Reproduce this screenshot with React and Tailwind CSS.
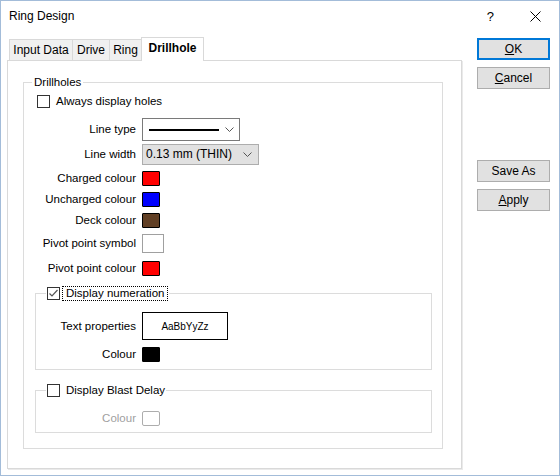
import React from 'react';

const font = { fontFamily: '"Liberation Sans", Arial, sans-serif' };

function Chevron() {
  return (
    <svg width="9" height="5" viewBox="0 0 9 5" className="shrink-0">
      <polyline points="0.5,0.5 4.5,4.5 8.5,0.5" fill="none" stroke="#555" strokeWidth="1" />
    </svg>
  );
}

function Checkbox({ checked }) {
  return (
    <span className="w-[13px] h-[13px] border border-[#333] bg-white flex items-center justify-center shrink-0">
      {checked && (
        <svg width="11" height="11" viewBox="0 0 11 11">
          <polyline points="1.5,5.5 4,8 9.5,2" fill="none" stroke="#555" strokeWidth="1.2" />
        </svg>
      )}
    </span>
  );
}

function Swatch({ color }) {
  return <span className="block w-[18px] h-[15px] border border-black rounded-[1px]" style={{ background: color }} />;
}

function Row({ label, labelW, className = '', children, muted }) {
  return (
    <div className={`flex items-center ${className}`}>
      <div className={`text-right shrink-0 ${muted ? 'text-[#a0a0a0]' : 'text-black'}`} style={{ width: labelW }}>
        {label}
      </div>
      <div className="ml-[6px] flex items-center">{children}</div>
    </div>
  );
}

function Button({ children, primary, className = '' }) {
  return (
    <button
      className={`w-[73px] h-[22px] bg-[#e1e1e1] flex items-center justify-center text-black ${
        primary ? 'border-2 border-[#0078d7]' : 'border border-[#adadad]'
      } ${className}`}
    >
      {children}
    </button>
  );
}

export default function App() {
  return (
    <div
      className="w-[560px] h-[476px] bg-white border border-[#a3bcd9] flex flex-col text-[11.5px] leading-[15px] text-black overflow-hidden"
      style={font}
    >
      {/* Title bar */}
      <div className="h-[30px] flex items-center shrink-0">
        <div className="pl-[8px] text-[12px]">Ring Design</div>
        <div className="ml-auto flex items-center">
          <span className="text-[13px] mr-[36px]">?</span>
          <svg width="11" height="11" viewBox="0 0 11 11" className="mr-[18px]">
            <line x1="0.5" y1="0.5" x2="10.5" y2="10.5" stroke="#000" strokeWidth="1" />
            <line x1="10.5" y1="0.5" x2="0.5" y2="10.5" stroke="#000" strokeWidth="1" />
          </svg>
        </div>
      </div>

      <div className="flex flex-1">
        {/* Left column: tabs + panel */}
        <div className="ml-[6px] pt-[6px] w-[455px] shrink-0 flex flex-col">
          <div className="flex items-end h-[23px] pl-[2px] relative z-10 text-[12px]">
            <div className="w-[64px] h-[21px] border border-b-0 border-[#d9d9d9] bg-[#f0f0f0] flex items-center justify-center">
              Input Data
            </div>
            <div className="-ml-px w-[38px] h-[21px] border border-b-0 border-[#d9d9d9] bg-[#f0f0f0] flex items-center justify-center">
              Drive
            </div>
            <div className="-ml-px w-[33px] h-[21px] border border-b-0 border-[#d9d9d9] bg-[#f0f0f0] flex items-center justify-center">
              Ring
            </div>
            <div className="-ml-px w-[63px] h-[24px] -mb-px border border-b-0 border-[#d9d9d9] bg-white flex items-center justify-center font-bold pb-[2px]">
              Drillhole
            </div>
          </div>

          <div className="w-[455px] h-[409px] border border-[#d9d9d9] shadow-[1px_1px_0_#eaeaea] pt-[14px]">
            <fieldset className="ml-[15px] w-[420px] h-[374px] border border-[#dcdcdc] p-0 m-0">
              <legend className="ml-[8px] px-[2px]">Drillholes</legend>
              <div className="pt-[5px]">
                <div className="flex items-center pl-[13px] h-[13px] gap-[6px]">
                  <Checkbox />
                  <span>Always display holes</span>
                </div>

                <Row label="Line type" labelW={112} className="mt-[10px] h-[23px]">
                  <div className="w-[98px] h-[23px] border border-[#7a7a7a] bg-white flex items-center pl-[6px] pr-[5px]">
                    <span className="block w-[70px] h-[2px] bg-black" />
                    <span className="ml-auto"><Chevron /></span>
                  </div>
                </Row>

                <Row label="Line width" labelW={112} className="mt-[3px] h-[21px]">
                  <div className="w-[117px] h-[21px] border border-[#adadad] bg-[#e1e1e1] flex items-center pl-[3px] pr-[6px] text-[12px]">
                    <span>0.13 mm (THIN)</span>
                    <span className="ml-auto"><Chevron /></span>
                  </div>
                </Row>

                <Row label="Charged colour" labelW={112} className="mt-[5px] h-[16px]">
                  <Swatch color="#ff0000" />
                </Row>
                <Row label="Uncharged colour" labelW={112} className="mt-[5px] h-[16px]">
                  <Swatch color="#0000ff" />
                </Row>
                <Row label="Deck colour" labelW={112} className="mt-[5px] h-[16px]">
                  <Swatch color="#613f24" />
                </Row>
                <Row label="Pivot point symbol" labelW={112} className="mt-[6px] h-[19px]">
                  <span className="block w-[22px] h-[19px] border border-[#a0a0a0] bg-white" />
                </Row>
                <Row label="Pivot point colour" labelW={112} className="mt-[7px] h-[16px]">
                  <Swatch color="#ff0000" />
                </Row>

                {/* Display numeration */}
                <fieldset className="mt-[10px] ml-[11px] w-[397px] border border-[#dcdcdc] p-0 m-0 pb-[7px]">
                  <legend className="ml-[10px] px-[1px] flex items-center">
                    <Checkbox checked />
                    <span className="ml-[2px] border border-dotted border-black px-[3px] leading-[13px]">
                      Display numeration
                    </span>
                  </legend>
                  <Row label="Text properties" labelW={100} className="mt-[11px] h-[28px]">
                    <div className="w-[86px] h-[28px] border border-black bg-white flex items-center justify-center text-[10px]">
                      AaBbYyZz
                    </div>
                  </Row>
                  <Row label="Colour" labelW={100} className="mt-[6px] h-[16px]">
                    <Swatch color="#000000" />
                  </Row>
                </fieldset>

                {/* Display Blast Delay */}
                <fieldset className="mt-[13px] ml-[11px] w-[397px] border border-[#dcdcdc] p-0 m-0 pb-[6px]">
                  <legend className="ml-[10px] px-[1px] flex items-center">
                    <Checkbox />
                    <span className="ml-[6px]">Display Blast Delay</span>
                  </legend>
                  <Row label="Colour" labelW={100} muted className="mt-[13px] h-[15px]">
                    <span className="block w-[18px] h-[15px] border border-[#adadad] rounded-[2px] bg-white" />
                  </Row>
                </fieldset>
              </div>
            </fieldset>
          </div>
        </div>

        {/* Right column: buttons */}
        <div className="ml-[15px] pt-[7px] flex flex-col text-[12px]">
          <Button primary>
            <span><span className="underline">O</span>K</span>
          </Button>
          <Button className="mt-[7px]">
            <span><span className="underline">C</span>ancel</span>
          </Button>
          <Button className="mt-[71px]">Save As</Button>
          <Button className="mt-[7px]">
            <span><span className="underline">A</span>pply</span>
          </Button>
        </div>
      </div>
    </div>
  );
}
